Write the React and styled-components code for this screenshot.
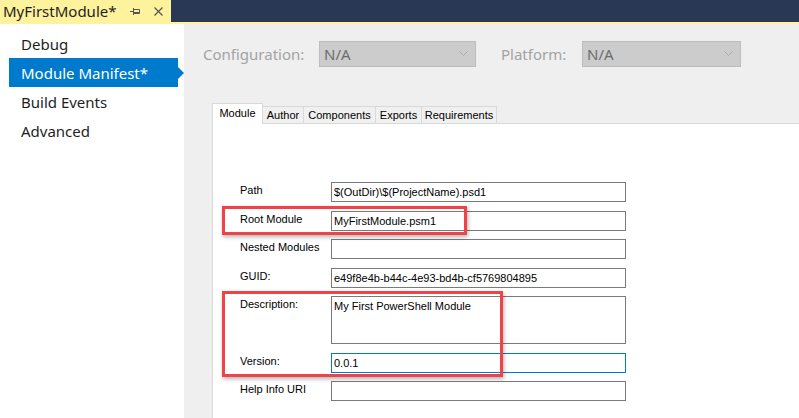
import React from 'react'
import styled, { createGlobalStyle } from 'styled-components'

const docYellow = "#fff29d";
const vsBlue = "#007acc";
const winFont = `"Liberation Sans", Arial, sans-serif`;

const GlobalStyle = createGlobalStyle`
	html, body {
		margin: 0;
		padding: 0;
		background: #efefef;
		overflow: hidden;
	}
	body {
		font-family: "Noto Sans", "Open Sans", sans-serif;
	}
`

const Page = styled.div`
	width: 799px;
	height: 418px;
	display: flex;
	flex-direction: column;
`

const TitleBar = styled.div`
	display: flex;
	height: 22px;
	background: #293955;
	border-bottom: 2px solid ${docYellow};
`

const DocTab = styled.div`
	width: 171px;
	box-sizing: border-box;
	padding-left: 3px;
	display: flex;
	align-items: center;
	background: ${docYellow};
	color: #1e1e1e;
	font-size: 15px;
`

const DocTitle = styled.span`
	flex: 1;
	line-height: 22px;
`

const TabIcon = styled.svg`
	margin-right: ${p => p.$mr}px;
	flex-shrink: 0;
`

const Body = styled.div`
	flex: 1;
	display: flex;
	min-height: 0;
`

const Nav = styled.div`
	width: 184px;
	background: #fff;
	padding-top: 5px;
	box-sizing: border-box;
`

const NavItem = styled.div`
	position: relative;
	height: 29px;
	width: 169px;
	margin-left: 9px;
	padding-left: 12px;
	box-sizing: border-box;
	display: flex;
	align-items: center;
	font-size: 15px;
	color: ${p => p.$active ? "#fff" : "#1e1e1e"};
	background: ${p => p.$active ? vsBlue : "transparent"};
	&::after {
		content: "";
		display: ${p => p.$active ? "block" : "none"};
		position: absolute;
		right: -6px;
		top: 50%;
		margin-top: -6px;
		border-left: 6px solid ${vsBlue};
		border-top: 6px solid transparent;
		border-bottom: 6px solid transparent;
	}
`

const Content = styled.div`
	flex: 1;
	background: #efefef;
	padding: 17px 0 0 19px;
	display: flex;
	flex-direction: column;
	min-width: 0;
`

const ConfigRow = styled.div`
	display: flex;
	align-items: center;
	height: 26px;
`

const ConfigLabel = styled.span`
	width: ${p => p.$w}px;
	margin-left: ${p => p.$ml || 0}px;
	color: #a3a3a3;
	font-size: 15px;
`

const FakeSelect = styled.div`
	width: ${p => p.$w}px;
	height: 26px;
	box-sizing: border-box;
	border: 1px solid #bcbcbc;
	background: #cccccc;
	color: #6c6c6c;
	font-size: 15px;
	display: flex;
	align-items: center;
	justify-content: space-between;
	padding: 0 7px 0 4px;
`

const TabControl = styled.div`
	margin: 36px 0 0 9px;
	flex: 1;
	display: flex;
	flex-direction: column;
`

const TabStrip = styled.div`
	display: flex;
	align-items: flex-end;
	height: 21px;
	position: relative;
	z-index: 1;
`

const Tab = styled.div`
	width: ${p => p.$w}px;
	height: ${p => p.$active ? 21 : 18}px;
	box-sizing: border-box;
	margin-left: -1px;
	border: 1px solid #d9d9d9;
	border-bottom: ${p => p.$active ? "none" : "1px solid #d9d9d9"};
	background: ${p => p.$active ? "#fff" : "#f0f0f0"};
	font-family: ${winFont};
	font-size: 11px;
	color: #000;
	display: flex;
	align-items: ${p => p.$active ? "flex-start" : "center"};
	justify-content: center;
	padding-top: ${p => p.$active ? 3 : 0}px;
	&:first-child {
		margin-left: 0;
	}
`

const Panel = styled.div`
	flex: 1;
	margin-top: -1px;
	background: #fff;
	border-top: 1px solid #d9d9d9;
	border-left: 1px solid #d9d9d9;
	padding: 58px 0 0 27px;
`

const Form = styled.div`
	position: relative;
	display: grid;
	grid-template-columns: 91px 295px;
	row-gap: 8.5px;
`

const FieldLabel = styled.div`
	align-self: start;
	padding-top: 2px;
	font-family: ${winFont};
	font-size: 11px;
	line-height: 13px;
	color: #000;
`

const TextBox = styled.div`
	height: ${p => p.$tall ? 48 : 20}px;
	box-sizing: border-box;
	border: 1px solid ${p => p.$focused ? "#0078d7" : "#7a7a7a"};
	background: #fff;
	padding: 0 2px;
	font-family: ${winFont};
	font-size: 11px;
	line-height: 18px;
	color: #000;
	white-space: nowrap;
	overflow: hidden;
`

const Callout = styled.div`
	position: absolute;
	left: -18px;
	top: ${p => p.$top}px;
	width: ${p => p.$w}px;
	height: ${p => p.$h}px;
	box-sizing: border-box;
	border: 3px solid #ee4347;
	box-shadow: 1px 2px 4px rgba(0, 0, 0, 0.3);
	pointer-events: none;
`

function Chevron() {
	return (
		<svg width="9" height="6" viewBox="0 0 9 6">
			<polyline points="0.5,0.5 4.5,4.5 8.5,0.5" fill="none" stroke="#a9a9a9" strokeWidth="1" />
		</svg>
	)
}

const fields = [
	{ label: "Path", value: "$(OutDir)\\$(ProjectName).psd1" },
	{ label: "Root Module", value: "MyFirstModule.psm1" },
	{ label: "Nested Modules", value: "" },
	{ label: "GUID:", value: "e49f8e4b-b44c-4e93-bd4b-cf5769804895" },
	{ label: "Description:", value: "My First PowerShell Module", tall: true },
	{ label: "Version:", value: "0.0.1", focused: true },
	{ label: "Help Info URI", value: "" },
]

const tabs = [
	{ name: "Module", w: 51 },
	{ name: "Author", w: 42 },
	{ name: "Components", w: 73 },
	{ name: "Exports", w: 47 },
	{ name: "Requirements", w: 76 },
]

const navItems = ["Debug", "Module Manifest*", "Build Events", "Advanced"]

export default function App() {
	return (
		<Page>
			<GlobalStyle />
			<TitleBar>
				<DocTab>
					<DocTitle>MyFirstModule*</DocTitle>
					<TabIcon $mr={14} width="10" height="8" viewBox="0 0 10 8">
						<path d="M0 4.5H3.5M3.5 1V8M3.5 2.5H9.5V6.5H3.5M3.5 5.5H9.5" fill="none" stroke="#555" strokeWidth="1" />
					</TabIcon>
					<TabIcon $mr={8} width="9" height="9" viewBox="0 0 9 9">
						<path d="M0.5 0.5L8.5 8.5M8.5 0.5L0.5 8.5" stroke="#555" strokeWidth="1.2" />
					</TabIcon>
				</DocTab>
			</TitleBar>
			<Body>
				<Nav>
					{navItems.map(item => (
						<NavItem key={item} $active={item === "Module Manifest*"}>{item}</NavItem>
					))}
				</Nav>
				<Content>
					<ConfigRow>
						<ConfigLabel $w={116}>Configuration:</ConfigLabel>
						<FakeSelect $w={157}>N/A<Chevron /></FakeSelect>
						<ConfigLabel $w={81} $ml={25}>Platform:</ConfigLabel>
						<FakeSelect $w={159}>N/A<Chevron /></FakeSelect>
					</ConfigRow>
					<TabControl>
						<TabStrip>
							{tabs.map((t, i) => (
								<Tab key={t.name} $w={t.w} $active={i === 0}>{t.name}</Tab>
							))}
						</TabStrip>
						<Panel>
							<Form>
								{fields.map(f => (
									<React.Fragment key={f.label}>
										<FieldLabel>{f.label}</FieldLabel>
										<TextBox $tall={f.tall} $focused={f.focused}>{f.value}</TextBox>
									</React.Fragment>
								))}
								<Callout $top={24} $w={245} $h={29} />
								<Callout $top={109} $w={281} $h={86} />
							</Form>
						</Panel>
					</TabControl>
				</Content>
			</Body>
		</Page>
	)
}
